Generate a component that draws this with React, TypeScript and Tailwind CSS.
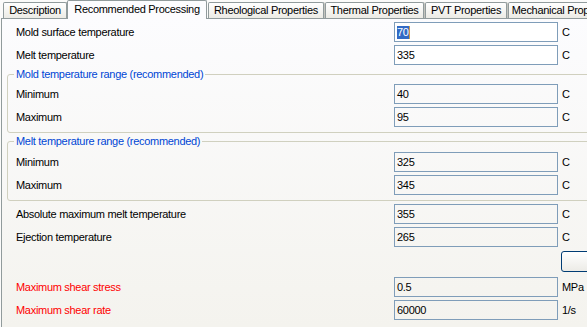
import React from "react";

const font = { fontFamily: '"Liberation Sans", Arial, sans-serif' };

function Tab({ label, width, active }: { label: string; width: string; active?: boolean }) {
  if (active) {
    return (
      <div
        className={`relative z-10 -mb-px flex h-[19px] ${width} shrink-0 items-start justify-center rounded-t-[2px] border-x border-t border-[#919b9c] bg-[#fcfcfe] pt-[2px] text-black`}
      >
        {label}
      </div>
    );
  }
  return (
    <div
      className={`ml-px flex h-[16px] ${width} shrink-0 items-center justify-center overflow-hidden whitespace-nowrap rounded-t-[2px] border-x border-t border-[#919b9c] bg-linear-to-b from-white to-[#ecebe5] text-black shadow-[1px_0_0_#c3c3bd]`}
    >
      {label}
    </div>
  );
}

interface RowProps {
  label: string;
  value: string;
  unit?: string;
  red?: boolean;
  white?: boolean;
  selected?: boolean;
  inset?: boolean;
}

function Row({ label, value, unit = "C", red, white, selected, inset }: RowProps) {
  return (
    <div className="flex h-[23px] items-start">
      <div
        className={`flex h-[20px] mt-px shrink-0 items-center ${inset ? "w-[386px] pl-[8px]" : "w-[392px] pl-[14px]"} ${red ? "text-[#ff0000]" : "text-black"}`}
      >
        {label}
      </div>
      <div
        className={`mt-px flex h-[20px] w-[164px] shrink-0 items-center border border-[#7f9db9] pl-[2px] ${white ? "bg-white" : "bg-transparent"}`}
      >
        {selected ? (
          <>
            <span className="bg-[#316ac5] text-white">{value}</span>
            <span className="h-[13px] w-px bg-[#c89b4b]" />
          </>
        ) : (
          value
        )}
      </div>
      <div className="mt-px flex h-[20px] items-center pl-[4px] text-black">{unit}</div>
    </div>
  );
}

function Group({ title, children, gapTop, padTop }: { title: string; children: React.ReactNode; gapTop: string; padTop: string }) {
  return (
    <fieldset className={`${gapTop} ml-[5px] w-[620px] rounded-[3px] border border-[#d0d0bf] ${padTop} pb-[3px]`}>
      <legend className="ml-[6px] h-[13px] px-[2px] leading-[13px] text-[#0046d5]">{title}</legend>
      {children}
    </fieldset>
  );
}

export default function App() {
  return (
    <div
      className="h-[327px] w-[587px] overflow-hidden bg-[#fbfbfa] text-[11px] leading-[13px] tracking-[-0.3px]"
      style={font}
    >
      {/* tab strip */}
      <div className="flex h-[18px] items-end pl-[2px]">
        <Tab label="Description" width="w-[64px]" />
        <Tab label="Recommended Processing" width="w-[140px]" active />
        <Tab label="Rheological Properties" width="w-[116px]" />
        <Tab label="Thermal Properties" width="w-[99px]" />
        <Tab label="PVT Properties" width="w-[82px]" />
        <Tab label="Mechanical Properties" width="w-[110px]" />
      </div>

      {/* tab page */}
      <div className="ml-px h-[309px] border-l border-t border-[#919b9c] bg-linear-to-b from-[#fcfcfe] to-[#f4f3ee] pt-[2px]">
        <Row label="Mold surface temperature" value="70" white selected />
        <Row label="Melt temperature" value="335" white />

        <Group title="Mold temperature range (recommended)" gapTop="mt-px" padTop="pt-[2px]">
          <Row label="Minimum" value="40" inset />
          <Row label="Maximum" value="95" inset />
        </Group>

        <Group title="Melt temperature range (recommended)" gapTop="mt-[2px]" padTop="pt-[3px]">
          <Row label="Minimum" value="325" inset />
          <Row label="Maximum" value="345" inset />
        </Group>

        <div className="mt-[2px]">
          <Row label="Absolute maximum melt temperature" value="355" />
          <Row label="Ejection temperature" value="265" />
        </div>

        <div className="flex h-[27px] items-start pl-[559px] pt-[2px]">
          <button className="h-[21px] w-[40px] shrink-0 rounded-[3px] border border-[#003c74] bg-linear-to-b from-white to-[#ecebe6]" />
        </div>

        <Row label="Maximum shear stress" value="0.5" unit="MPa" red />
        <Row label="Maximum shear rate" value="60000" unit="1/s" red />
      </div>
    </div>
  );
}
